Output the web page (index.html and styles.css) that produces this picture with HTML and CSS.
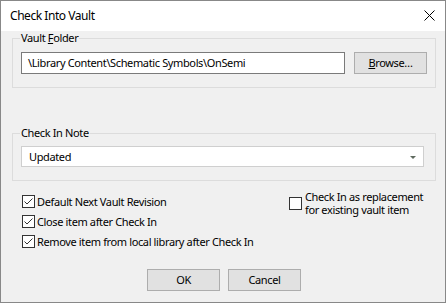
FILE: index.html
```html
<!DOCTYPE html>
<html lang="en">
<head>
  <meta charset="UTF-8" />
  <title>Check Into Vault</title>
  <link rel="stylesheet" href="styles.css">
</head>
<body>
  <div class="window">
    <div class="titlebar">
      <span class="title">Check Into Vault</span>
      <svg class="close" width="11" height="11" viewBox="0 0 11 11">
        <path d="M0.5 0.5 L10.5 10.5 M10.5 0.5 L0.5 10.5" stroke="#000" stroke-width="1" fill="none"/>
      </svg>
    </div>

    <div class="content">
      <fieldset class="group group-vault">
        <legend>Vault <u>F</u>older</legend>
        <div class="folder-row">
          <div class="textbox">\Library Content\Schematic Symbols\OnSemi</div>
          <button class="btn"><u>B</u>rowse…</button>
        </div>
      </fieldset>

      <fieldset class="group group-note">
        <legend>Check In Note</legend>
        <div class="combo">
          <span>Updated</span>
          <span class="combo-arrow"></span>
        </div>
      </fieldset>

      <div class="options">
        <div class="options-col">
          <label class="check">
            <span class="box"><svg width="11" height="11" viewBox="0 0 11 11"><path d="M1.5 5.5 L4 8 L9.5 2.5" stroke="#333" fill="none"/></svg></span>
            Default Next Vault Revision
          </label>
          <label class="check">
            <span class="box"><svg width="11" height="11" viewBox="0 0 11 11"><path d="M1.5 5.5 L4 8 L9.5 2.5" stroke="#333" fill="none"/></svg></span>
            Close item after Check In
          </label>
          <label class="check">
            <span class="box"><svg width="11" height="11" viewBox="0 0 11 11"><path d="M1.5 5.5 L4 8 L9.5 2.5" stroke="#333" fill="none"/></svg></span>
            Remove item from local library after Check In
          </label>
        </div>
        <label class="check check-multi">
          <span class="box"></span>
          <span>Check In as replacement<br>for existing vault item</span>
        </label>
      </div>

      <div class="dialog-buttons">
        <button class="btn">OK</button>
        <button class="btn">Cancel</button>
      </div>
    </div>
  </div>
</body>
</html>
```

FILE: styles.css
```css
* { box-sizing: border-box; margin: 0; padding: 0; }

html, body {
  background: #f0f0f0;
}

body {
  font-family: "Noto Sans", "Open Sans", sans-serif;
  font-size: 11px;
  letter-spacing: -0.37px;
  color: #000;
}

.window {
  width: 446px;
  height: 303px;
  border: 1px solid #888;
  display: flex;
  flex-direction: column;
  background: #f0f0f0;
}

.titlebar {
  height: 30px;
  background: #fff;
  display: flex;
  align-items: center;
  justify-content: space-between;
  padding: 0 10px 0 9px;
  flex-shrink: 0;
}

.title {
  font-size: 12px;
  letter-spacing: -0.45px;
  line-height: 14px;
}

.close {
  display: block;
  margin-top: -1px;
}

.content {
  flex: 1;
  padding: 0 9px 0 11px;
}

.group {
  border: 1px solid #dcdcdc;
  min-width: 0;
}

.group legend {
  line-height: 14px;
  padding: 0 1px;
  margin-left: -1px;
}

.group-vault {
  padding: 7px 8px 13px 8px;
}

.group-note {
  margin-top: 38px;
  padding: 6px 11px 13px 8px;
}

.folder-row {
  display: flex;
  gap: 9px;
}

.textbox {
  flex: 1;
  height: 22px;
  background: #fff;
  border: 1px solid #7a7a7a;
  padding: 0 6px;
  line-height: 20px;
  white-space: nowrap;
  overflow: hidden;
}

.btn {
  font: inherit;
  letter-spacing: inherit;
  color: #000;
  width: 73px;
  height: 22px;
  background: #e1e1e1;
  border: 1px solid #adadad;
  line-height: 20px;
  text-align: center;
}

.combo {
  height: 21px;
  background: #fff;
  border: 1px solid #cfcfcf;
  display: flex;
  align-items: center;
  justify-content: space-between;
  padding: 0 7px 0 7px;
}

.combo-arrow {
  width: 0;
  height: 0;
  border-left: 3px solid transparent;
  border-right: 3px solid transparent;
  border-top: 3px solid #5f6a5f;
  margin-top: 1px;
}

.options {
  margin-top: 10px;
  padding-left: 10px;
  display: grid;
  grid-template-columns: 267px auto;
}

.check {
  display: flex;
  align-items: center;
  height: 20px;
  white-space: nowrap;
}

.box {
  width: 13px;
  height: 13px;
  border: 1px solid #333;
  background: #fff;
  margin-right: 2px;
  flex-shrink: 0;
}

.box svg {
  display: block;
}

.check-multi {
  height: 26px;
  line-height: 13px;
  align-self: start;
  margin-top: -1px;
}

.check-multi .box {
  margin-right: 3px;
}

.dialog-buttons {
  margin-top: 18px;
  display: flex;
  justify-content: center;
  gap: 8px;
}
```
